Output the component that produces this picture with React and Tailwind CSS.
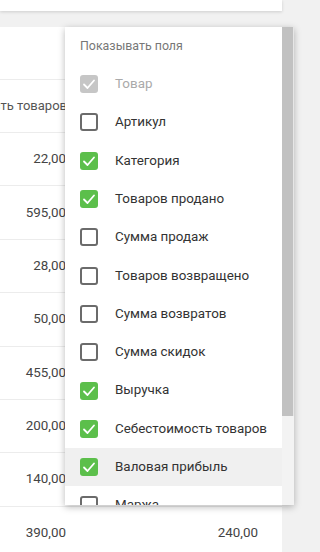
import React from "react";

const rows = [
  ["22,00", "12,00"],
  ["595,00", "310,00"],
  ["28,00", "16,00"],
  ["50,00", "30,00"],
  ["455,00", "260,00"],
  ["200,00", "120,00"],
  ["140,00", "80,00"],
  ["390,00", "240,00"],
];

const fields = [
  { label: "Товар", state: "disabled" },
  { label: "Артикул", state: "off" },
  { label: "Категория", state: "on" },
  { label: "Товаров продано", state: "on" },
  { label: "Сумма продаж", state: "off" },
  { label: "Товаров возвращено", state: "off" },
  { label: "Сумма возвратов", state: "off" },
  { label: "Сумма скидок", state: "off" },
  { label: "Выручка", state: "on" },
  { label: "Себестоимость товаров", state: "on" },
  { label: "Валовая прибыль", state: "on", hover: true },
  { label: "Маржа", state: "off" },
];

function Check() {
  return (
    <svg viewBox="0 0 18 18" className="w-[18px] h-[18px]">
      <polyline points="4,9.5 7.5,13 14,5.5" fill="none" stroke="#fff" strokeWidth="1.8" strokeLinecap="round" strokeLinejoin="round" />
    </svg>
  );
}

function Box({ state }) {
  if (state === "on")
    return (
      <div className="w-[18px] h-[18px] rounded-[3px] bg-[#5cbf4b] flex items-center justify-center shrink-0">
        <Check />
      </div>
    );
  if (state === "disabled")
    return (
      <div className="w-[18px] h-[18px] rounded-[3px] bg-[#c6c6c6] flex items-center justify-center shrink-0">
        <Check />
      </div>
    );
  return <div className="w-[18px] h-[18px] rounded-[3px] border-2 border-[#6b6b6b] shrink-0" />;
}

export default function App() {
  return (
    <div
      className="relative w-[320px] h-[552px] overflow-hidden bg-[#f1f1f1]"
      style={{ fontFamily: "Roboto, 'Noto Sans', sans-serif" }}
    >
      <div className="w-[282px] h-[11px] bg-white shadow-[0_1px_3px_rgba(0,0,0,0.15)]" />
      <div className="mt-[16px] w-[282px] h-[540px] bg-white overflow-hidden">
        <div className="h-[53px] border-b border-[#ececec]" />
        <div className="flex h-[53px] border-b border-[#ececec] text-[13px] text-[#555]">
          <div className="w-[67px] shrink-0 flex items-center justify-end overflow-hidden whitespace-nowrap">
            Себестоимость товаров
          </div>
        </div>
        {rows.map(([a, b], i) => (
          <div
            key={i}
            className={`flex items-center h-[53.4px] text-[13.4px] text-[#444] ${i < rows.length - 1 ? "border-b border-[#ececec]" : ""}`}
          >
            <div className="w-[66px] text-right">{a}</div>
            <div className="w-[192px] text-right">{b}</div>
          </div>
        ))}
      </div>

      <div className="absolute left-[65px] top-[27px] w-[229px] h-[478px] bg-white shadow-[0_2px_7px_rgba(0,0,0,0.28)] flex overflow-hidden">
        <div className="flex-1 overflow-hidden">
          <div className="h-[38px] flex items-center pl-[15px] text-[12.4px] text-[#777]">
            Показывать поля
          </div>
          {fields.map((f, i) => (
            <div
              key={i}
              className={`h-[38.3px] flex items-center pl-[15px] gap-[17px] text-[13.4px] ${f.hover ? "bg-[#f0f0f0]" : ""} ${f.state === "disabled" ? "text-[#aaa]" : "text-[#333]"}`}
            >
              <Box state={f.state} />
              <span className="whitespace-nowrap">{f.label}</span>
            </div>
          ))}
        </div>
        <div className="w-[12px] flex flex-col bg-[#f3f3f3]">
          <div className="h-[389px] bg-[#c1c1c1] border-r border-[#e6e6e6]" />
        </div>
      </div>
    </div>
  );
}
